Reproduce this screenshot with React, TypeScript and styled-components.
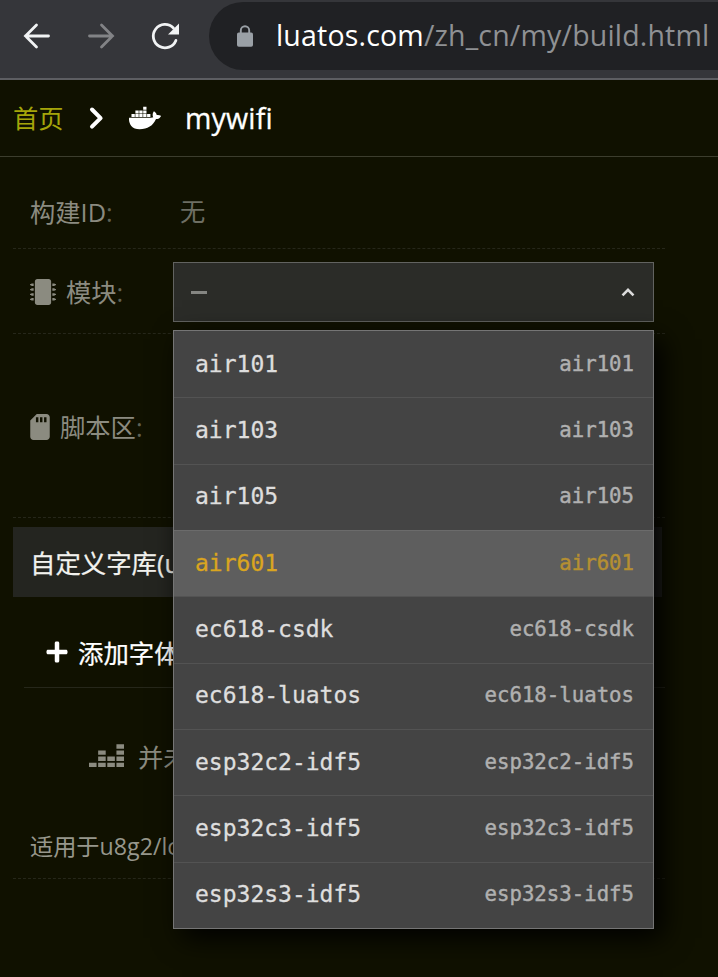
import React from "react";
import styled, { createGlobalStyle } from "styled-components";
import { FaDocker, FaMicrochip, FaSdCard, FaDeezer, FaPlus } from "react-icons/fa";

const ui = `"Open Sans", "Noto Sans CJK SC", sans-serif`;
const mono = `"DejaVu Sans Mono", monospace`;

const GlobalStyle = createGlobalStyle`
  * { box-sizing: border-box; }
  body { margin: 0; background: #101100; overflow: hidden; }
`;

const Page = styled.div`
  width: 718px;
  height: 977px;
  overflow: hidden;
  background: #101100;
  font-family: ${ui};
  font-size: 25.3px;
  color: #8b8b80;
  white-space: nowrap;
  display: flex;
  flex-direction: column;
`;

const BrowserBar = styled.header`
  height: 80px;
  flex: none;
  display: flex;
  background: #35363a;
  border-bottom: 2px solid #5d5e62;
`;

const NavButtons = styled.nav`
  width: 209px;
  flex: none;
  display: flex;
  align-items: center;
  gap: 32px;
  padding: 0 0 7px 21px;
  svg { flex: none; display: block; }
`;

const AddressBar = styled.div`
  flex: none;
  width: 560px;
  height: 68px;
  margin-top: 2px;
  border-radius: 34px;
  background: #202124;
  display: flex;
  align-items: center;
  padding: 0 0 1px 27px;
  gap: 22px;
`;

const Url = styled.div`
  font-size: 28.5px;
  line-height: 40px;
  margin-bottom: 2px;
  letter-spacing: 0.18px;
  color: #8f9194;
`;
const Host = styled.span`
  color: #fff;
`;

const Breadcrumb = styled.div`
  height: 77px;
  flex: none;
  display: flex;
  align-items: center;
  padding: 0 0 0 13px;
  border-bottom: 1px solid #3c3d2d;
  color: #fff;
  svg { flex: none; display: block; }
`;
const HomeLink = styled.a`
  color: #a5a50a;
  width: 75px;
  line-height: 36px;
`;
const BoatIcon = styled(FaDocker)`
  margin-left: 25px;
`;
const Crumb = styled.span`
  font-size: 28.5px;
  line-height: 40px;
  margin-left: 24px;
  letter-spacing: 0.2px;
  -webkit-text-stroke: 0.3px currentColor;
`;

const Form = styled.main`
  width: 652px;
  margin-left: 13px;
  flex: none;
  display: flex;
  flex-direction: column;
`;

const Row = styled.div<{ $height: number; $shift?: number }>`
  height: ${(p) => p.$height}px;
  flex: none;
  display: flex;
  align-items: center;
  padding: ${(p) => p.$shift ?? 0}px 0 0 17px;
  border-bottom: 1px dashed #26271a;
`;

const Label = styled.div<{ $gap?: number }>`
  width: 143px;
  flex: none;
  display: flex;
  align-items: center;
  gap: ${(p) => p.$gap ?? 0}px;
  line-height: 36px;
  svg { flex: none; }
`;
const CardIcon = styled(FaSdCard)`
  width: 20px;
  height: 26px;
`;
const Colon = styled.span`
  color: #606156;
`;
const Value = styled.div`
  color: #6d6e63;
  padding: 0 0 4px 7px;
`;

const Select = styled.div`
  position: relative;
  width: 481px;
  height: 60px;
  flex: none;
  display: flex;
  align-items: center;
  justify-content: space-between;
  padding: 0 17px 0 17px;
  background: #2b2c28;
  border: 1px solid #626360;
`;
const Dash = styled.span`
  width: 16px;
  height: 3px;
  background: #858682;
`;

const Menu = styled.ul`
  position: absolute;
  z-index: 2;
  top: 67px;
  left: -1px;
  width: 481px;
  height: 599px;
  margin: 0;
  padding: 0;
  list-style: none;
  background: #444;
  border: 1px solid #757575;
  box-shadow: 9px 9px 26px #000;
  display: grid;
  grid-template-rows: repeat(9, 1fr);
  font-family: ${mono};
`;
const Option = styled.li<{ $active: boolean }>`
  display: flex;
  align-items: center;
  justify-content: space-between;
  padding: 0 19px 2px 21px;
  background: ${(p) => (p.$active ? "#5e5e5e" : "#444")};
  color: ${(p) => (p.$active ? "#daa520" : "#dedede")};
  border-top: 1px solid ${(p) => (p.$active ? "#6b6b6b" : "#535353")};
  &:first-child { border-top-color: transparent; }
`;
const Name = styled.span`
  font-size: 23px;
  -webkit-text-stroke: 0.3px currentColor;
`;
const Hint = styled.span`
  font-size: 20.7px;
  opacity: 0.7;
  -webkit-text-stroke: 0.4px currentColor;
`;

const GroupTitle = styled.div`
  height: 70px;
  width: 649px;
  flex: none;
  margin-top: 9px;
  padding: 0 0 0 17px;
  display: flex;
  align-items: center;
  background: #242520;
  color: #f2f2ee;
  font-size: 25.4px;
  -webkit-text-stroke: 0.25px currentColor;
`;
const AddRow = styled.div`
  height: 91px;
  flex: none;
  margin-left: 11px;
  padding: 20px 0 0 21px;
  display: flex;
  align-items: center;
  gap: 9px;
  color: #fff;
  font-size: 25.4px;
  border-bottom: 1px solid #26271a;
  -webkit-text-stroke: 0.25px currentColor;
`;
const EmptyRow = styled.div`
  height: 123px;
  flex: none;
  display: flex;
  align-items: center;
  gap: 14px;
  padding: 12px 0 0 76px;
`;
const Note = styled.div`
  height: 68px;
  flex: none;
  padding: 0 0 0 17px;
  display: flex;
  align-items: center;
  font-size: 23.2px;
  color: #97978c;
  border-bottom: 1px dashed #26271a;
`;

const modules = ["air101", "air103", "air105", "air601", "ec618-csdk", "ec618-luatos", "esp32c2-idf5", "esp32c3-idf5", "esp32s3-idf5"];

const Back = () => (
  <svg width="32" height="32" viewBox="0 0 32 32" fill="none" stroke="#f1f3f4" strokeWidth="2.8" strokeLinecap="round">
    <path d="M27.5 16H4.5M15.5 5l-11 11 11 11" />
  </svg>
);
const Forward = () => (
  <svg width="32" height="32" viewBox="0 0 32 32" fill="none" stroke="#828386" strokeWidth="2.8" strokeLinecap="round">
    <path d="M4.5 16h23M16.5 5l11 11-11 11" />
  </svg>
);
const Reload = () => (
  <svg width="32" height="32" viewBox="0 0 32 32">
    <path d="M26.9 20.4A11.7 11.7 0 1 1 24.4 8" fill="none" stroke="#f1f3f4" strokeWidth="2.8" strokeLinecap="round" />
    <path d="M30 3.5v11H19z" fill="#f1f3f4" />
  </svg>
);
const Lock = () => (
  <svg width="18" height="22" viewBox="0 0 18 22">
    <path d="M4.8 9V5.4a4.2 4.2 0 0 1 8.4 0V9" fill="none" stroke="#9aa0a6" strokeWidth="1.9" />
    <rect x="1" y="7.5" width="16" height="14.3" rx="1.8" fill="#9aa0a6" />
  </svg>
);

export default function App() {
  return (
    <>
      <GlobalStyle />
      <Page>
        <BrowserBar>
          <NavButtons>
            <Back />
            <Forward />
            <Reload />
          </NavButtons>
          <AddressBar>
            <Lock />
            <Url>
              <Host>luatos.com</Host>/zh_cn/my/build.html
            </Url>
          </AddressBar>
        </BrowserBar>
        <Breadcrumb>
          <HomeLink>首页</HomeLink>
          <svg width="16" height="24" viewBox="0 0 16 24" fill="none" stroke="#fff" strokeWidth="4" strokeLinecap="round" strokeLinejoin="round">
            <path d="M4 3.5l8.6 8.6L4 20.7" />
          </svg>
          <BoatIcon size={32} />
          <Crumb>mywifi</Crumb>
        </Breadcrumb>
        <Form>
          <Row $height={92} $shift={19}>
            <Label>构建ID<Colon>:</Colon></Label>
            <Value>无</Value>
          </Row>
          <Row $height={85} $shift={2}>
            <Label $gap={10}>
              <FaMicrochip size={26} />
              <span>模块<Colon>:</Colon></span>
            </Label>
            <Select>
              <Dash />
              <svg width="16" height="12" viewBox="0 0 16 12" fill="none" stroke="#dcdcdc" strokeWidth="2.6">
                <path d="M2.5 9.3 8 3.8l5.5 5.5" />
              </svg>
              <Menu>
                {modules.map((m) => (
                  <Option key={m} $active={m === "air601"}>
                    <Name>{m}</Name>
                    <Hint>{m}</Hint>
                  </Option>
                ))}
              </Menu>
            </Select>
          </Row>
          <Row $height={184} $shift={2}>
            <Label $gap={10}>
              <CardIcon />
              <span>脚本区<Colon>:</Colon></span>
            </Label>
          </Row>
          <GroupTitle>自定义字库(u</GroupTitle>
          <AddRow>
            <FaPlus size={24} />
            添加字体
          </AddRow>
          <EmptyRow>
            <FaDeezer size={35} />
            并未
          </EmptyRow>
          <Note>适用于u8g2/lc</Note>
        </Form>
      </Page>
    </>
  );
}
